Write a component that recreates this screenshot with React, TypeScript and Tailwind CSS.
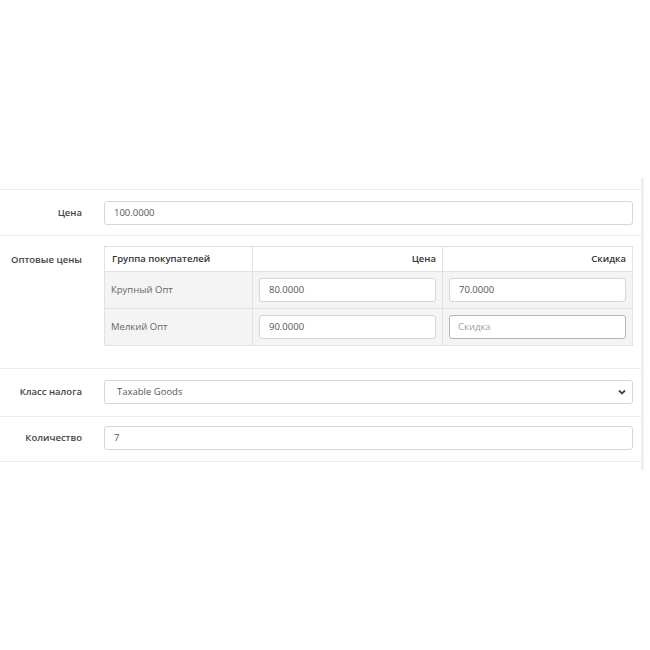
import React from 'react';

const font = { fontFamily: '"Open Sans", "Noto Sans", sans-serif' };

const discounts = [
  { group: 'Крупный Опт', price: '80.0000', discount: '70.0000' },
  { group: 'Мелкий Опт', price: '90.0000', discount: '' },
];

const Label: React.FC<{ text: string; top?: boolean }> = ({ text, top }) => (
  <div
    className={`w-[104px] shrink-0 pr-[22px] text-right text-[9.5px] font-semibold text-[#444] ${
      top ? 'pt-[7px]' : 'flex items-center justify-end'
    }`}
  >
    {text}
  </div>
);

const TextBox: React.FC<{ value: string; className?: string }> = ({ value, className }) => (
  <div
    className={`flex h-[24px] items-center rounded-[3px] border border-[#d6d6d6] bg-white px-[9px] text-[9.5px] text-[#555] ${className ?? ''}`}
  >
    {value}
  </div>
);

export default function App() {
  return (
    <div className="h-[650px] w-[650px] bg-white pt-[178px]" style={font}>
      <div className="flex">
        <div className="w-[641px] pt-[11px]">
          {/* Цена */}
          <div className="flex border-t border-[#ececec] pb-[10px] pt-[11px]">
            <Label text="Цена" />
            <TextBox value="100.0000" className="w-[529px]" />
          </div>

          {/* Оптовые цены */}
          <div className="flex border-t border-[#ececec] pb-[22px] pt-[10px]">
            <Label text="Оптовые цены" top />
            <div className="w-[529px] border border-[#e2e2e2] text-[9.5px]">
              <div className="flex h-[24px] items-center bg-white font-semibold text-[#333]">
                <div className="w-[147px] px-[7px]">Группа покупателей</div>
                <div className="flex h-full w-[190px] items-center justify-end border-l border-[#e2e2e2] px-[6px]">
                  Цена
                </div>
                <div className="flex h-full flex-1 items-center justify-end border-l border-[#e2e2e2] px-[6px]">
                  Скидка
                </div>
              </div>
              {discounts.map((row) => (
                <div key={row.group} className="flex h-[37px] border-t border-[#e2e2e2] bg-[#f4f4f4]">
                  <div className="flex w-[147px] items-center px-[6px] text-[#666]">{row.group}</div>
                  <div className="flex w-[190px] items-center border-l border-[#e2e2e2] px-[6px]">
                    <TextBox value={row.price} className="h-[23px] w-full" />
                  </div>
                  <div className="flex flex-1 items-center border-l border-[#e2e2e2] px-[6px]">
                    {row.discount ? (
                      <TextBox value={row.discount} className="h-[23px] w-full" />
                    ) : (
                      <div className="flex h-[24px] w-full items-center rounded-[3px] border border-[#b4b4b4] bg-white px-[8px] text-[9.5px] text-[#a0a0a0]">
                        Скидка
                      </div>
                    )}
                  </div>
                </div>
              ))}
            </div>
          </div>

          {/* Класс налога */}
          <div className="flex border-t border-[#ececec] pb-[12px] pt-[11px]">
            <Label text="Класс налога" />
            <div className="flex h-[24px] w-[529px] items-center justify-between rounded-[3px] border border-[#d6d6d6] bg-white pl-[12px] pr-[5px] text-[9.5px] text-[#555]">
              <span>Taxable Goods</span>
              <svg width="10" height="10" viewBox="0 0 10 10" fill="none">
                <path d="M2 3.5 5 6.5 8 3.5" stroke="#444" strokeWidth="1.8" />
              </svg>
            </div>
          </div>

          {/* Количество */}
          <div className="flex border-y border-[#ececec] pb-[11px] pt-[9px]">
            <Label text="Количество" />
            <TextBox value="7" className="w-[529px]" />
          </div>
        </div>
        <div className="h-[292px] w-[3px] bg-[#f0f0f0]" />
      </div>
    </div>
  );
}
